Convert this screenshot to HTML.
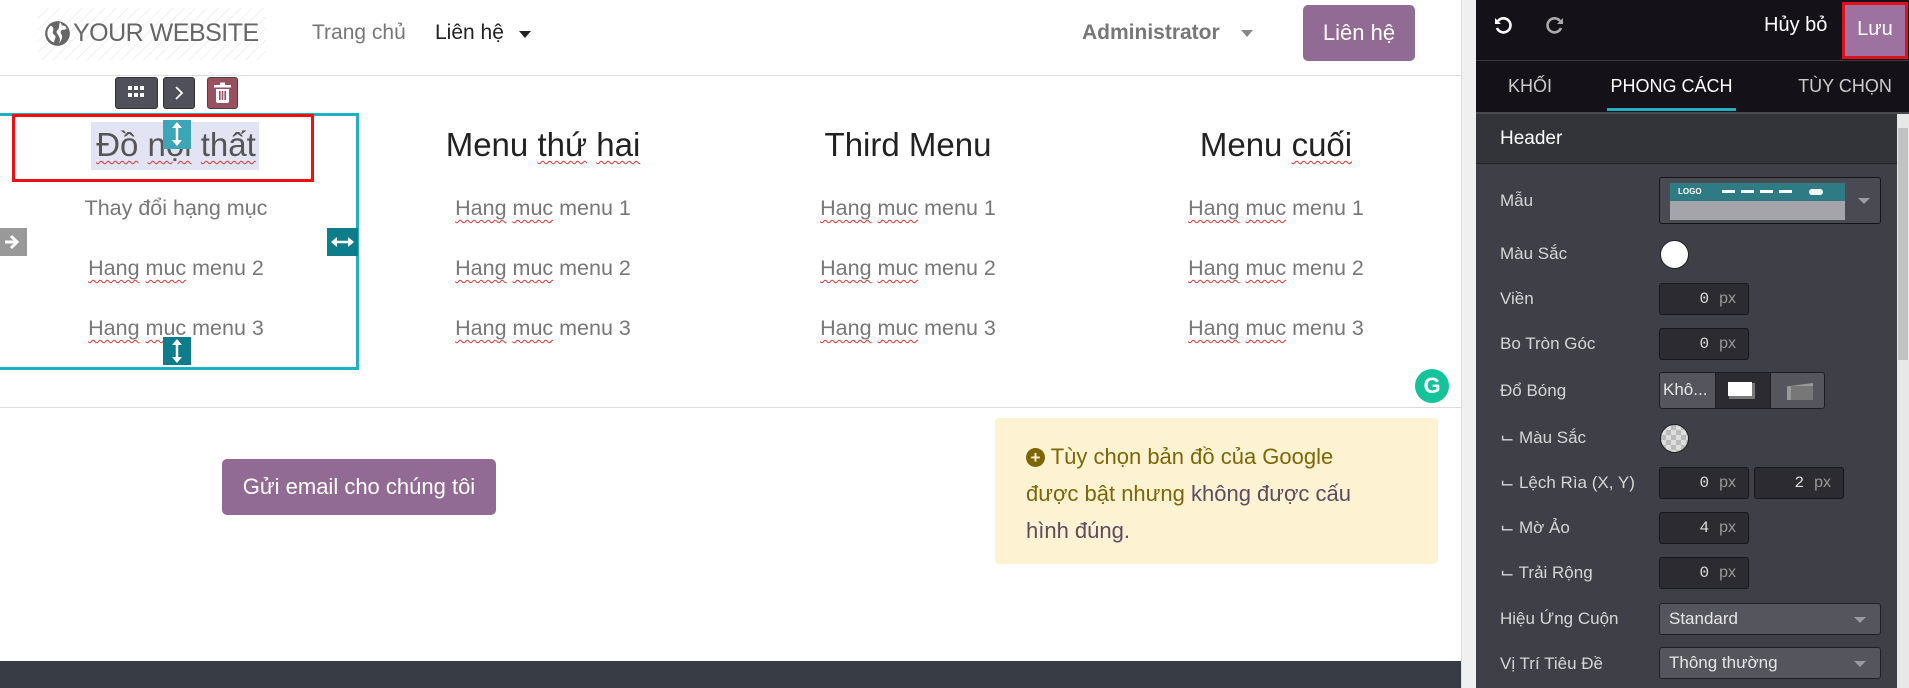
<!DOCTYPE html>
<html><head><meta charset="utf-8"><style>
*{box-sizing:border-box;margin:0;padding:0}
body{width:1909px;height:688px;overflow:hidden;background:#fff;font-family:"Liberation Sans","DejaVu Sans",sans-serif;position:relative}
.a{position:absolute}
.sq{text-decoration:underline wavy #d33;text-decoration-thickness:1px;text-underline-offset:4px}
.h{font-size:33px;color:#222;text-align:center;width:300px;margin-left:-150px}
.it{font-size:21.5px;color:#777;text-align:center;width:300px;margin-left:-150px}
.lbl{position:absolute;left:1500px;color:#d6d6d6;font-size:17px}
.inp{position:absolute;left:1659px;width:90px;height:32px;background:#2b2b31;border:1px solid #18181c;border-radius:3px;color:#ddd;font-family:"Liberation Mono",monospace;font-size:16px;text-align:right;padding:6px 12px 0 0}
.inp span{font-family:"Liberation Sans",sans-serif;color:#999;margin-left:10px}
.sel{position:absolute;left:1659px;width:222px;height:32px;background:#55555d;border:1px solid #1f1f24;border-radius:3px;color:#e6e6e6;font-size:17px;padding:5px 9px}
.car{position:absolute;right:14px;top:13px;border-left:6px solid transparent;border-right:6px solid transparent;border-top:6px solid #9a9aa0}
.dash{display:inline-block;width:13px;height:3px;background:#fff;margin-right:6px;vertical-align:middle}
</style></head><body>
<!-- header -->
<div class="a" style="left:38px;top:8px;width:228px;height:52px;background:repeating-linear-gradient(135deg,#fff 0 7px,#f1f1f1 7px 8px)"></div>
<svg class="a" style="left:44px;top:20px" width="27" height="27" viewBox="0 0 24 24"><circle cx="12" cy="12" r="11" fill="#666"/><path d="M6 5c2 1 3 3 2 5s1 3 2 4-1 4-1 6c-3-1-6-4-6-8 0-3 1-5 3-7zM14 2c2 1 1 3 3 3s3 2 3 3c-2 1-4 0-5 2s2 3 1 6-2 4-3 5c2-3 1-5 0-7s-3-3-1-5 1-3 2-7z" fill="#fff"/></svg>
<div class="a" style="left:73px;top:19px;font-size:25px;color:#666;letter-spacing:-0.5px">YOUR WEBSITE</div>
<div class="a" style="left:312px;top:21px;font-size:21px;color:#777">Trang chủ</div>
<div class="a" style="left:435px;top:21px;font-size:21px;color:#222">Liên hệ</div>
<div class="a" style="left:519px;top:31px;border-left:6px solid transparent;border-right:6px solid transparent;border-top:7px solid #222"></div>
<div class="a" style="left:1082px;top:21px;font-size:21px;color:#777;font-weight:bold">Administrator</div>
<div class="a" style="left:1241px;top:30px;border-left:6px solid transparent;border-right:6px solid transparent;border-top:7px solid #888"></div>
<div class="a" style="left:1303px;top:5px;width:112px;height:56px;background:#926b94;border-radius:5px;color:#fff;font-size:22px;text-align:center;line-height:56px">Liên hệ</div>
<div class="a" style="left:0;top:75px;width:1461px;height:1px;background:#ddd"></div>
<!-- page scrollbar -->
<div class="a" style="left:1461px;top:0;width:15px;height:688px;background:#f0f0f0;border-left:1px solid #ddd"></div>
<!-- toolbar -->
<div class="a" style="left:115px;top:77px;width:43px;height:32px;background:#50505a;border:1px solid #333;border-radius:3px"></div>
<svg class="a" style="left:128px;top:86px" width="17" height="13" viewBox="0 0 17 13"><g fill="#fff"><rect x="0" y="0" width="4" height="4"/><rect x="6" y="0" width="4" height="4"/><rect x="12" y="0" width="4" height="4"/><rect x="0" y="7" width="4" height="4"/><rect x="6" y="7" width="4" height="4"/><rect x="12" y="7" width="4" height="4"/></g></svg>
<div class="a" style="left:163px;top:77px;width:32px;height:32px;background:#50505a;border:1px solid #333;border-radius:3px"></div>
<svg class="a" style="left:173px;top:85px" width="12" height="16" viewBox="0 0 12 16"><path d="M3 2l6 6-6 6" fill="none" stroke="#fff" stroke-width="1.8"/></svg>
<div class="a" style="left:207px;top:77px;width:31px;height:32px;background:#99505f;border:1px solid #444;border-radius:3px"></div>
<svg class="a" style="left:213px;top:82px" width="19" height="22" viewBox="0 0 19 22"><rect x="1" y="3" width="17" height="2.5" fill="#fff"/><rect x="7" y="0.5" width="5" height="3" fill="#fff"/><path d="M3 7h13v12a2 2 0 0 1-2 2H5a2 2 0 0 1-2-2z" fill="#fff"/><rect x="6" y="9" width="1.6" height="9" fill="#99505f"/><rect x="8.7" y="9" width="1.6" height="9" fill="#99505f"/><rect x="11.4" y="9" width="1.6" height="9" fill="#99505f"/></svg>
<!-- selection boxes -->
<div class="a" style="left:-5px;top:113px;width:364px;height:257px;border:3px solid #20b0c6"></div>
<div class="a" style="left:91px;top:122px;width:168px;height:48px;background:#e3e4f3"></div>
<div class="a" style="left:12px;top:114px;width:302px;height:68px;border:3px solid #e11"></div>
<!-- columns -->
<div class="a h" style="left:176px;top:126px;color:#555"><span class="sq">Đồ</span> <span class="sq">nội</span> <span class="sq">thất</span></div>
<div class="a h" style="left:543px;top:126px">Menu <span class="sq">thứ</span> <span class="sq">hai</span></div>
<div class="a h" style="left:908px;top:126px">Third Menu</div>
<div class="a h" style="left:1276px;top:126px">Menu <span class="sq">cuối</span></div>
<div class="a it" style="left:176px;top:196px">Thay đổi hạng mục</div>
<div class="a it" style="left:176px;top:256px"><span class="sq">Hang</span> <span class="sq">muc</span> menu 2</div>
<div class="a it" style="left:176px;top:316px"><span class="sq">Hang</span> <span class="sq">muc</span> menu 3</div>
<div class="a it" style="left:543px;top:196px"><span class="sq">Hang</span> <span class="sq">muc</span> menu 1</div>
<div class="a it" style="left:543px;top:256px"><span class="sq">Hang</span> <span class="sq">muc</span> menu 2</div>
<div class="a it" style="left:543px;top:316px"><span class="sq">Hang</span> <span class="sq">muc</span> menu 3</div>
<div class="a it" style="left:908px;top:196px"><span class="sq">Hang</span> <span class="sq">muc</span> menu 1</div>
<div class="a it" style="left:908px;top:256px"><span class="sq">Hang</span> <span class="sq">muc</span> menu 2</div>
<div class="a it" style="left:908px;top:316px"><span class="sq">Hang</span> <span class="sq">muc</span> menu 3</div>
<div class="a it" style="left:1276px;top:196px"><span class="sq">Hang</span> <span class="sq">muc</span> menu 1</div>
<div class="a it" style="left:1276px;top:256px"><span class="sq">Hang</span> <span class="sq">muc</span> menu 2</div>
<div class="a it" style="left:1276px;top:316px"><span class="sq">Hang</span> <span class="sq">muc</span> menu 3</div>
<!-- handles -->
<div class="a" style="left:0;top:228px;width:27px;height:28px;background:#999"></div>
<svg class="a" style="left:3px;top:233px" width="18" height="18" viewBox="0 0 18 18"><path d="M2 9h11M8 3l6 6-6 6" fill="none" stroke="#fff" stroke-width="3"/></svg>
<div class="a" style="left:327px;top:228px;width:31px;height:28px;background:#0e7d8b"></div>
<svg class="a" style="left:331px;top:235px" width="23" height="14" viewBox="0 0 23 14"><path d="M3 7h17" stroke="#fff" stroke-width="2.5"/><path d="M0 7l6-5v10zM23 7l-6-5v10z" fill="#fff"/></svg>
<div class="a" style="left:163px;top:120px;width:28px;height:29px;background:#3aa6b7"></div>
<svg class="a" style="left:170px;top:122px" width="14" height="24" viewBox="0 0 14 24"><path d="M7 4v16" stroke="#fff" stroke-width="2.5"/><path d="M7 0l5 6H2zM7 24l5-6H2z" fill="#fff"/></svg>
<div class="a" style="left:163px;top:337px;width:28px;height:28px;background:#0e7d8b"></div>
<svg class="a" style="left:170px;top:339px" width="14" height="24" viewBox="0 0 14 24"><path d="M7 4v16" stroke="#fff" stroke-width="2.5"/><path d="M7 0l5 6H2zM7 24l5-6H2z" fill="#fff"/></svg>
<!-- grammarly -->
<div class="a" style="left:1415px;top:369px;width:34px;height:34px;border-radius:50%;background:#15c39a;color:#fff;font-size:22px;text-align:center;line-height:34px;font-weight:bold">G</div>
<div class="a" style="left:0;top:407px;width:1461px;height:1px;background:#ddd"></div>
<!-- email btn -->
<div class="a" style="left:222px;top:459px;width:274px;height:56px;background:#926b94;border-radius:5px;color:#fff;font-size:22px;text-align:center;line-height:56px">Gửi email cho chúng tôi</div>
<!-- alert -->
<div class="a" style="left:995px;top:418px;width:443px;height:146px;background:#fdf3d3;border-radius:4px;padding:20px 55px 0 31px;font-size:22px;line-height:37px;color:#7d6608">
<span style="display:inline-block;width:19px;height:19px;border-radius:50%;background:#7d6608;color:#fdf3d3;font-size:17px;line-height:19px;text-align:center;font-weight:bold;vertical-align:1px">+</span> Tùy chọn bản đồ của Google được bật nhưng <span style="color:#5f4a60">không được cấu hình đúng.</span></div>
<!-- footer -->
<div class="a" style="left:0;top:661px;width:1461px;height:27px;background:#373c45"></div>
<!-- sidebar -->
<div class="a" style="left:1476px;top:0;width:433px;height:688px;background:#3f3f47"></div>
<div class="a" style="left:1476px;top:0;width:433px;height:113px;background:#141218"></div>
<div class="a" style="left:1476px;top:60px;width:433px;height:1px;background:#3a3a40"></div>
<div class="a" style="left:1476px;top:112px;width:433px;height:2px;background:#4a4a52"></div>
<svg class="a" style="left:1493px;top:15px" width="20" height="20" viewBox="0 0 20 20"><path d="M5 6a7 7 0 1 1-1 7" fill="none" stroke="#fff" stroke-width="2.6"/><path d="M2 3v6h6z" fill="#fff"/></svg>
<svg class="a" style="left:1545px;top:15px" width="20" height="20" viewBox="0 0 20 20"><path d="M15 6a7 7 0 1 0 1 7" fill="none" stroke="#aaa" stroke-width="2.6"/><path d="M18 3v6h-6z" fill="#aaa"/></svg>
<div class="a" style="left:1764px;top:14px;font-size:20px;color:#fff">Hủy bỏ</div>
<div class="a" style="left:1842px;top:2px;width:66px;height:57px;background:#9e72a0;border:3px solid #e0101a;color:#fff;font-size:20px;text-align:center;line-height:49px">Lưu</div>
<div class="a" style="left:1476px;top:76px;width:108px;text-align:center;font-size:18px;color:#ccc">KHỐI</div>
<div class="a" style="left:1600px;top:76px;width:143px;text-align:center;font-size:18px;color:#fff">PHONG CÁCH</div>
<div class="a" style="left:1607px;top:108px;width:129px;height:3px;background:#20b0c6"></div>
<div class="a" style="left:1785px;top:76px;width:120px;text-align:center;font-size:18px;color:#ccc">TÙY CHỌN</div>
<div class="a" style="left:1476px;top:114px;width:421px;height:50px;background:#33343a;border-bottom:1px solid #222"></div>
<div class="a" style="left:1500px;top:128px;font-size:19px;color:#fff">Header</div>
<div class="a" style="left:1897px;top:114px;width:12px;height:574px;background:#e8e8e8"></div>
<div class="a" style="left:1898px;top:128px;width:10px;height:232px;background:#c2c2c2"></div>
<div class="lbl" style="top:191px">Mẫu</div>
<div class="a" style="left:1659px;top:177px;width:222px;height:47px;background:#4a4a52;border:1px solid #151518;border-radius:3px"></div>
<div class="a" style="left:1670px;top:183px;width:175px;height:18px;background:#2f7b84;color:#fff;font-size:8px;font-weight:bold;padding:4px 0 0 8px">LOGO <span style="margin-left:18px"><span class="dash"></span><span class="dash"></span><span class="dash"></span><span class="dash"></span></span><span style="display:inline-block;width:14px;height:6px;border-radius:3px;background:#fff;margin-left:11px;vertical-align:middle"></span></div>
<div class="a" style="left:1670px;top:201px;width:175px;height:19px;background:#a5a4aa"></div>
<div class="a" style="left:1858px;top:198px;border-left:6px solid transparent;border-right:6px solid transparent;border-top:6px solid #9a9aa0"></div>
<div class="lbl" style="top:244px">Màu Sắc</div>
<div class="a" style="left:1660px;top:240px;width:29px;height:29px;border-radius:50%;background:#fff;border:1px solid #222"></div>
<div class="lbl" style="top:289px">Viền</div>
<div class="inp" style="top:283px">0<span>px</span></div>
<div class="lbl" style="top:334px">Bo Tròn Góc</div>
<div class="inp" style="top:328px">0<span>px</span></div>
<div class="lbl" style="top:381px">Đổ Bóng</div>
<div class="a" style="left:1659px;top:372px;width:166px;height:37px;border:1px solid #1d1d22;border-radius:3px;background:#55555d;overflow:hidden">
<div class="a" style="left:0;top:0;width:55px;height:35px;color:#e6e6e6;font-size:17px;padding:7px 3px;white-space:nowrap">Khô...</div>
<div class="a" style="left:55px;top:0;width:56px;height:35px;background:#2b2b31;border-left:1px solid #1d1d22;border-right:1px solid #1d1d22"></div>
<div class="a" style="left:69px;top:10px;width:26px;height:16px;background:#777;"></div>
<div class="a" style="left:68px;top:9px;width:24px;height:14px;background:#fff"></div>
<div class="a" style="left:127px;top:10px;width:26px;height:17px;background:#999;clip-path:polygon(0 20%,100% 0,100% 100%,0 100%)"></div>
<div class="a" style="left:131px;top:13px;width:22px;height:14px;background:#777"></div>
</div>
<div class="lbl" style="top:428px">⌙ Màu Sắc</div>
<div class="a" style="left:1660px;top:424px;width:29px;height:29px;border-radius:50%;border:1px solid #222;background:repeating-conic-gradient(#ddd 0 25%,#bbb 0 50%) 0 0/10px 10px"></div>
<div class="lbl" style="top:473px">⌙ Lệch Rìa (X, Y)</div>
<div class="inp" style="top:467px">0<span>px</span></div>
<div class="inp" style="top:467px;left:1754px">2<span>px</span></div>
<div class="lbl" style="top:518px">⌙ Mờ Ảo</div>
<div class="inp" style="top:512px">4<span>px</span></div>
<div class="lbl" style="top:563px">⌙ Trải Rộng</div>
<div class="inp" style="top:557px">0<span>px</span></div>
<div class="lbl" style="top:609px">Hiệu Ứng Cuộn</div>
<div class="sel" style="top:603px">Standard<div class="car"></div></div>
<div class="lbl" style="top:654px">Vị Trí Tiêu Đề</div>
<div class="sel" style="top:647px">Thông thường<div class="car"></div></div>
</body></html>
